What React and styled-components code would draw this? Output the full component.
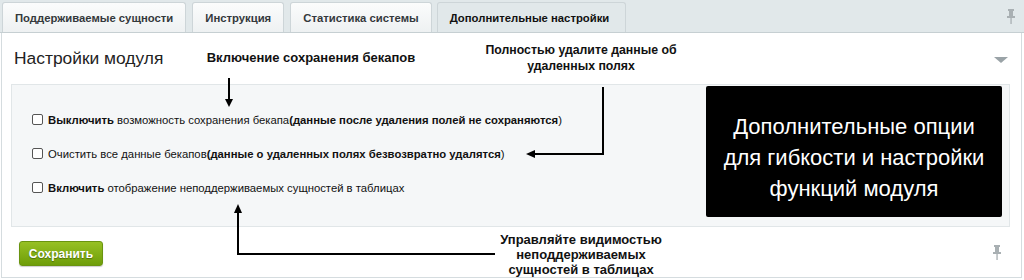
import React from "react";
import styled, { createGlobalStyle } from "styled-components";

const GlobalStyle = createGlobalStyle`
    body {
        margin: 0;
        background: #ffffff;
        font-family: "Liberation Sans", Arial, sans-serif;
    }
`;

const Page = styled.div`
    position: relative;
    width: 1024px;
    height: 280px;
    overflow: hidden;
`;

const TabBar = styled.div`
    height: 33px;
    background: #e1e8ea;
    display: flex;
    align-items: flex-end;
    padding: 0 0 0 2px;
    border-bottom: 1px solid #c6cfd2;
    box-sizing: border-box;
`;

const Tab = styled.div`
    height: 30px;
    box-sizing: border-box;
    padding: 0 12px;
    margin-right: 6px;
    display: flex;
    align-items: center;
    font-size: 11.3px;
    font-weight: bold;
    color: ${p => (p.$active ? "#111" : "#34393c")};
    border: 1px solid #cdd5d8;
    border-bottom: none;
    border-radius: 3px 3px 0 0;
    background: ${p =>
        p.$active ? "#e1e8ea" : "linear-gradient(#fbfcfc, #eef1f2)"};
    ${p => p.$active && "padding: 0 16px 0 12px; margin-left: -1px;"}
`;

const PinSlot = styled.div`
    margin-left: auto;
    width: 20px;
    height: 100%;
    display: flex;
    align-items: center;
    justify-content: center;
    margin-right: 3px;
`;

const Panel = styled.div`
    margin: 0 2px 0 1px;
    border-left: 1px solid #d5dcdf;
    border-right: 1px solid #d5dcdf;
    border-bottom: 1px solid #d5dcdf;
    height: 245px;
    box-sizing: border-box;
    display: flex;
    flex-direction: column;
`;

const PanelHead = styled.div`
    height: 51px;
    display: flex;
    align-items: center;
    justify-content: space-between;
    padding: 0 13px 0 12px;
`;

const Title = styled.h2`
    margin: 0;
    font-family: "Liberation Sans", Arial, sans-serif;
    font-size: 17.4px;
    font-weight: normal;
    color: #222;
`;

const Toggle = styled.div`
    width: 0;
    height: 0;
    border-left: 7px solid transparent;
    border-right: 7px solid transparent;
    border-top: 6px solid #9aa3a7;
    margin-top: 2px;
`;

const OptionsBox = styled.div`
    margin: 0 11px 0 9px;
    height: 143px;
    box-sizing: border-box;
    background: #f5f7f8;
    border: 1px solid #e1e6e8;
    display: flex;
    justify-content: space-between;
    padding: 1px 7px 0 20px;
`;

const OptionList = styled.div`
    display: flex;
    flex-direction: column;
    padding-top: 26px;
    gap: 19px;
`;

const OptionRow = styled.label`
    display: flex;
    align-items: center;
    font-size: 11.3px;
    color: #111;
    height: 15px;
`;

const Check = styled.span`
    width: 9px;
    height: 9px;
    border: 1px solid #555;
    border-radius: 2px;
    background: #fff;
    margin-right: 5px;
    flex-shrink: 0;
`;

const InfoCard = styled.div`
    width: 296px;
    height: 131px;
    box-sizing: border-box;
    padding-top: 12px;
    background: #000;
    color: #fff;
    border-radius: 2px;
    display: flex;
    align-items: center;
    justify-content: center;
    text-align: center;
    font-size: 22px;
    line-height: 31px;
`;

const Footer = styled.div`
    flex: 1;
    display: flex;
    align-items: center;
    justify-content: space-between;
    padding: 0 19px 0 17px;
`;

const SaveButton = styled.button`
    width: 84px;
    height: 25px;
    border: 1px solid #6a9410;
    border-radius: 3px;
    background: linear-gradient(#97c024, #6e9e09);
    color: #fff;
    font-family: "Liberation Sans", Arial, sans-serif;
    font-size: 12px;
    font-weight: bold;
    text-shadow: 0 1px 1px rgba(0, 0, 0, 0.35);
    box-shadow: 0 1px 1px rgba(0, 0, 0, 0.2);
    margin-top: 3px;
`;

const Note = styled.div`
    position: absolute;
    left: ${p => p.$x}px;
    top: ${p => p.$y}px;
    width: ${p => p.$w}px;
    text-align: center;
    font-size: ${p => p.$size}px;
    font-weight: bold;
    line-height: ${p => p.$lh}px;
    color: #111;
`;

const Arrows = styled.svg`
    position: absolute;
    left: 0;
    top: 0;
    pointer-events: none;
`;

const Pin = () => (
    <svg width="10" height="16" viewBox="0 0 10 16">
        <rect x="2" y="1" width="6" height="2" fill="#a9b0b3" />
        <rect x="3" y="3" width="4" height="5" fill="#a9b0b3" />
        <rect x="1" y="8" width="8" height="2" fill="#a9b0b3" />
        <rect x="4.4" y="10" width="1.3" height="6" fill="#a9b0b3" />
    </svg>
);

const tabs = [
    "Поддерживаемые сущности",
    "Инструкция",
    "Статистика системы",
    "Дополнительные настройки",
];

export default function App() {
    return (
        <Page>
            <GlobalStyle />
            <TabBar>
                {tabs.map((t, i) => (
                    <Tab key={t} $active={i === 3}>
                        {t}
                    </Tab>
                ))}
                <PinSlot>
                    <Pin />
                </PinSlot>
            </TabBar>
            <Panel>
                <PanelHead>
                    <Title>Настройки модуля</Title>
                    <Toggle />
                </PanelHead>
                <OptionsBox>
                    <OptionList>
                        <OptionRow>
                            <Check />
                            <span>
                                <b>Выключить</b> возможность сохранения бекапа
                                <b>(данные после удаления полей не сохраняются</b>)
                            </span>
                        </OptionRow>
                        <OptionRow>
                            <Check />
                            <span>
                                Очистить все данные бекапов
                                <b>(данные о удаленных полях безвозвратно удалятся</b>)
                            </span>
                        </OptionRow>
                        <OptionRow>
                            <Check />
                            <span>
                                <b>Включить</b> отображение неподдерживаемых сущностей в таблицах
                            </span>
                        </OptionRow>
                    </OptionList>
                    <InfoCard>
                        Дополнительные опции
                        <br />
                        для гибкости и настройки
                        <br />
                        функций модуля
                    </InfoCard>
                </OptionsBox>
                <Footer>
                    <SaveButton>Сохранить</SaveButton>
                    <Pin />
                </Footer>
            </Panel>

            <Note $x={191} $y={50} $w={240} $size={13} $lh={16}>
                Включение сохранения бекапов
            </Note>
            <Note $x={451} $y={42} $w={260} $size={12.3} $lh={16}>
                Полностью удалите данные об
                <br />
                удаленных полях
            </Note>
            <Note $x={471} $y={232} $w={220} $size={13} $lh={15}>
                Управляйте видимостью
                <br />
                неподдерживаемых
                <br />
                сущностей в таблицах
            </Note>

            <Arrows width="1024" height="280">
                <g stroke="#000" strokeWidth="2" fill="none">
                    <line x1="229" y1="78" x2="229" y2="100" />
                    <polyline points="603,87 603,154 534,154" />
                    <polyline points="495,254 238,254 238,212" />
                </g>
                <g fill="#000">
                    <polygon points="225,99 233,99 229,107" />
                    <polygon points="535,150 535,158 526,154" />
                    <polygon points="234,213 242,213 238,204" />
                </g>
            </Arrows>
        </Page>
    );
}
